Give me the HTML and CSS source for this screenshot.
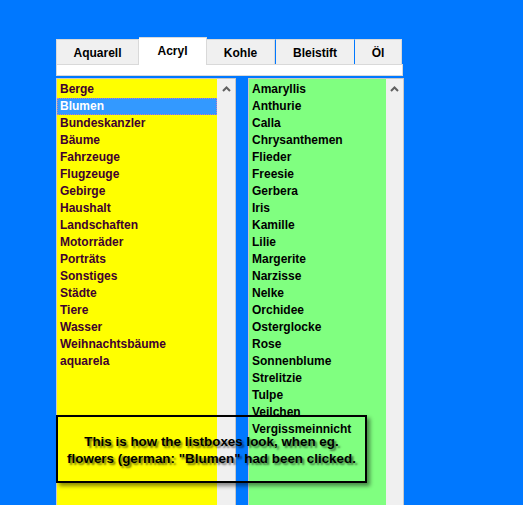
FILE: index.html
```html
<!DOCTYPE html>
<html>
<head>
<meta charset="utf-8">
<link rel="stylesheet" href="styles.css">
</head>
<body>
<div class="window">
  <div class="tabs">
    <div class="tab w-aquarell">Aquarell</div>
    <div class="tab active w-acryl">Acryl</div>
    <div class="tab w-kohle">Kohle</div>
    <div class="tab hover w-bleistift">Bleistift</div>
    <div class="tab w-oel">Öl</div>
  </div>
  <div class="panel"></div>
  <div class="lists">
    <div class="listbox left">
      <ul class="items yellow">
        <li>Berge</li>
        <li class="selected">Blumen</li>
        <li>Bundeskanzler</li>
        <li>Bäume</li>
        <li>Fahrzeuge</li>
        <li>Flugzeuge</li>
        <li>Gebirge</li>
        <li>Haushalt</li>
        <li>Landschaften</li>
        <li>Motorräder</li>
        <li>Porträts</li>
        <li>Sonstiges</li>
        <li>Städte</li>
        <li>Tiere</li>
        <li>Wasser</li>
        <li>Weihnachtsbäume</li>
        <li>aquarela</li>
      </ul>
      <div class="scrollbar">
        <svg class="arrow" width="9" height="6" viewBox="0 0 9 6"><polyline points="1,5 4.5,1.5 8,5" fill="none" stroke="#606060" stroke-width="2"/></svg>
      </div>
    </div>
    <div class="listbox right">
      <ul class="items green">
        <li>Amaryllis</li>
        <li>Anthurie</li>
        <li>Calla</li>
        <li>Chrysanthemen</li>
        <li>Flieder</li>
        <li>Freesie</li>
        <li>Gerbera</li>
        <li>Iris</li>
        <li>Kamille</li>
        <li>Lilie</li>
        <li>Margerite</li>
        <li>Narzisse</li>
        <li>Nelke</li>
        <li>Orchidee</li>
        <li>Osterglocke</li>
        <li>Rose</li>
        <li>Sonnenblume</li>
        <li>Strelitzie</li>
        <li>Tulpe</li>
        <li>Veilchen</li>
        <li>Vergissmeinnicht</li>
      </ul>
      <div class="scrollbar">
        <svg class="arrow" width="9" height="6" viewBox="0 0 9 6"><polyline points="1,5 4.5,1.5 8,5" fill="none" stroke="#606060" stroke-width="2"/></svg>
      </div>
    </div>
  </div>
</div>
<div class="note">
  <p>This is how the listboxes look, when eg.<br>flowers (german: "Blumen" had been clicked.</p>
</div>
</body>
</html>
```

FILE: styles.css
```css
html, body {
  margin: 0;
  padding: 0;
  height: 100%;
  overflow: hidden;
}
body {
  background: #0078ff;
  font-family: "Liberation Sans", Arial, sans-serif;
  font-weight: bold;
  font-size: 12px;
  color: #000;
}
.window {
  margin: 37px 0 0 56px;
  width: 348px;
}
.tabs {
  display: flex;
  align-items: flex-end;
  height: 27px;
  width: 346px;
}
.tab {
  box-sizing: border-box;
  height: 25px;
  background: #f0f0f0;
  border: 1px solid #d9d9d9;
  border-bottom: none;
  display: flex;
  align-items: center;
  justify-content: center;
  padding-top: 1px;
}
.tab + .tab { border-left: none; }
.tab.active {
  height: 28px;
  background: #fff;
  margin-bottom: -1px;
  position: relative;
  z-index: 1;
  padding-bottom: 2px;
}
.tab.hover {
  border-left: 1px solid #0078ff;
  border-right: 1px solid #0078ff;
}
.w-aquarell { width: 83px; }
.w-acryl { width: 68px; }
.w-kohle { width: 68px; }
.w-bleistift { width: 80px; }
.w-oel { width: 47px; }
.panel {
  box-sizing: border-box;
  width: 347px;
  height: 12px;
  background: #fff;
  border: 1px solid #d9d9d9;
}
.lists {
  display: flex;
  gap: 12px;
  margin-top: 2px;
}
.listbox {
  display: flex;
  border: 1px solid #c8c8c8;
  height: 440px;
}
.items {
  list-style: none;
  margin: 0;
  padding: 2px 0 0 0;
}
.items li {
  height: 17px;
  line-height: 17px;
  padding-left: 3px;
  white-space: nowrap;
}
.yellow {
  background: #ffff00;
  width: 160px;
  color: #400030;
}
.green {
  background: #80ff80;
  width: 137px;
  color: #000;
}
.items li.selected {
  background: #3399ff;
  color: #fff;
  box-sizing: border-box;
  outline: 1px dotted #c080c0;
  outline-offset: -1px;
}
.scrollbar {
  background: #f0f0f0;
  display: flex;
  justify-content: center;
  padding-top: 7px;
  box-sizing: border-box;
}
.left .scrollbar { width: 18px; }
.right .scrollbar { width: 17px; }
.arrow { display: block; }
.note {
  position: absolute;
  left: 56px;
  top: 415px;
  width: 311px;
  height: 68px;
  box-sizing: border-box;
  border: 2px solid #000;
  box-shadow: 3px 3px 4px rgba(0, 0, 0, 0.45);
  display: flex;
  align-items: center;
  justify-content: center;
}
.note p {
  margin: 0;
  text-align: center;
  font-size: 13.4px;
  line-height: 17px;
  padding-top: 1px;
  color: #000;
  text-shadow: 2px 2px 2px rgba(0, 0, 0, 0.55);
}
```
